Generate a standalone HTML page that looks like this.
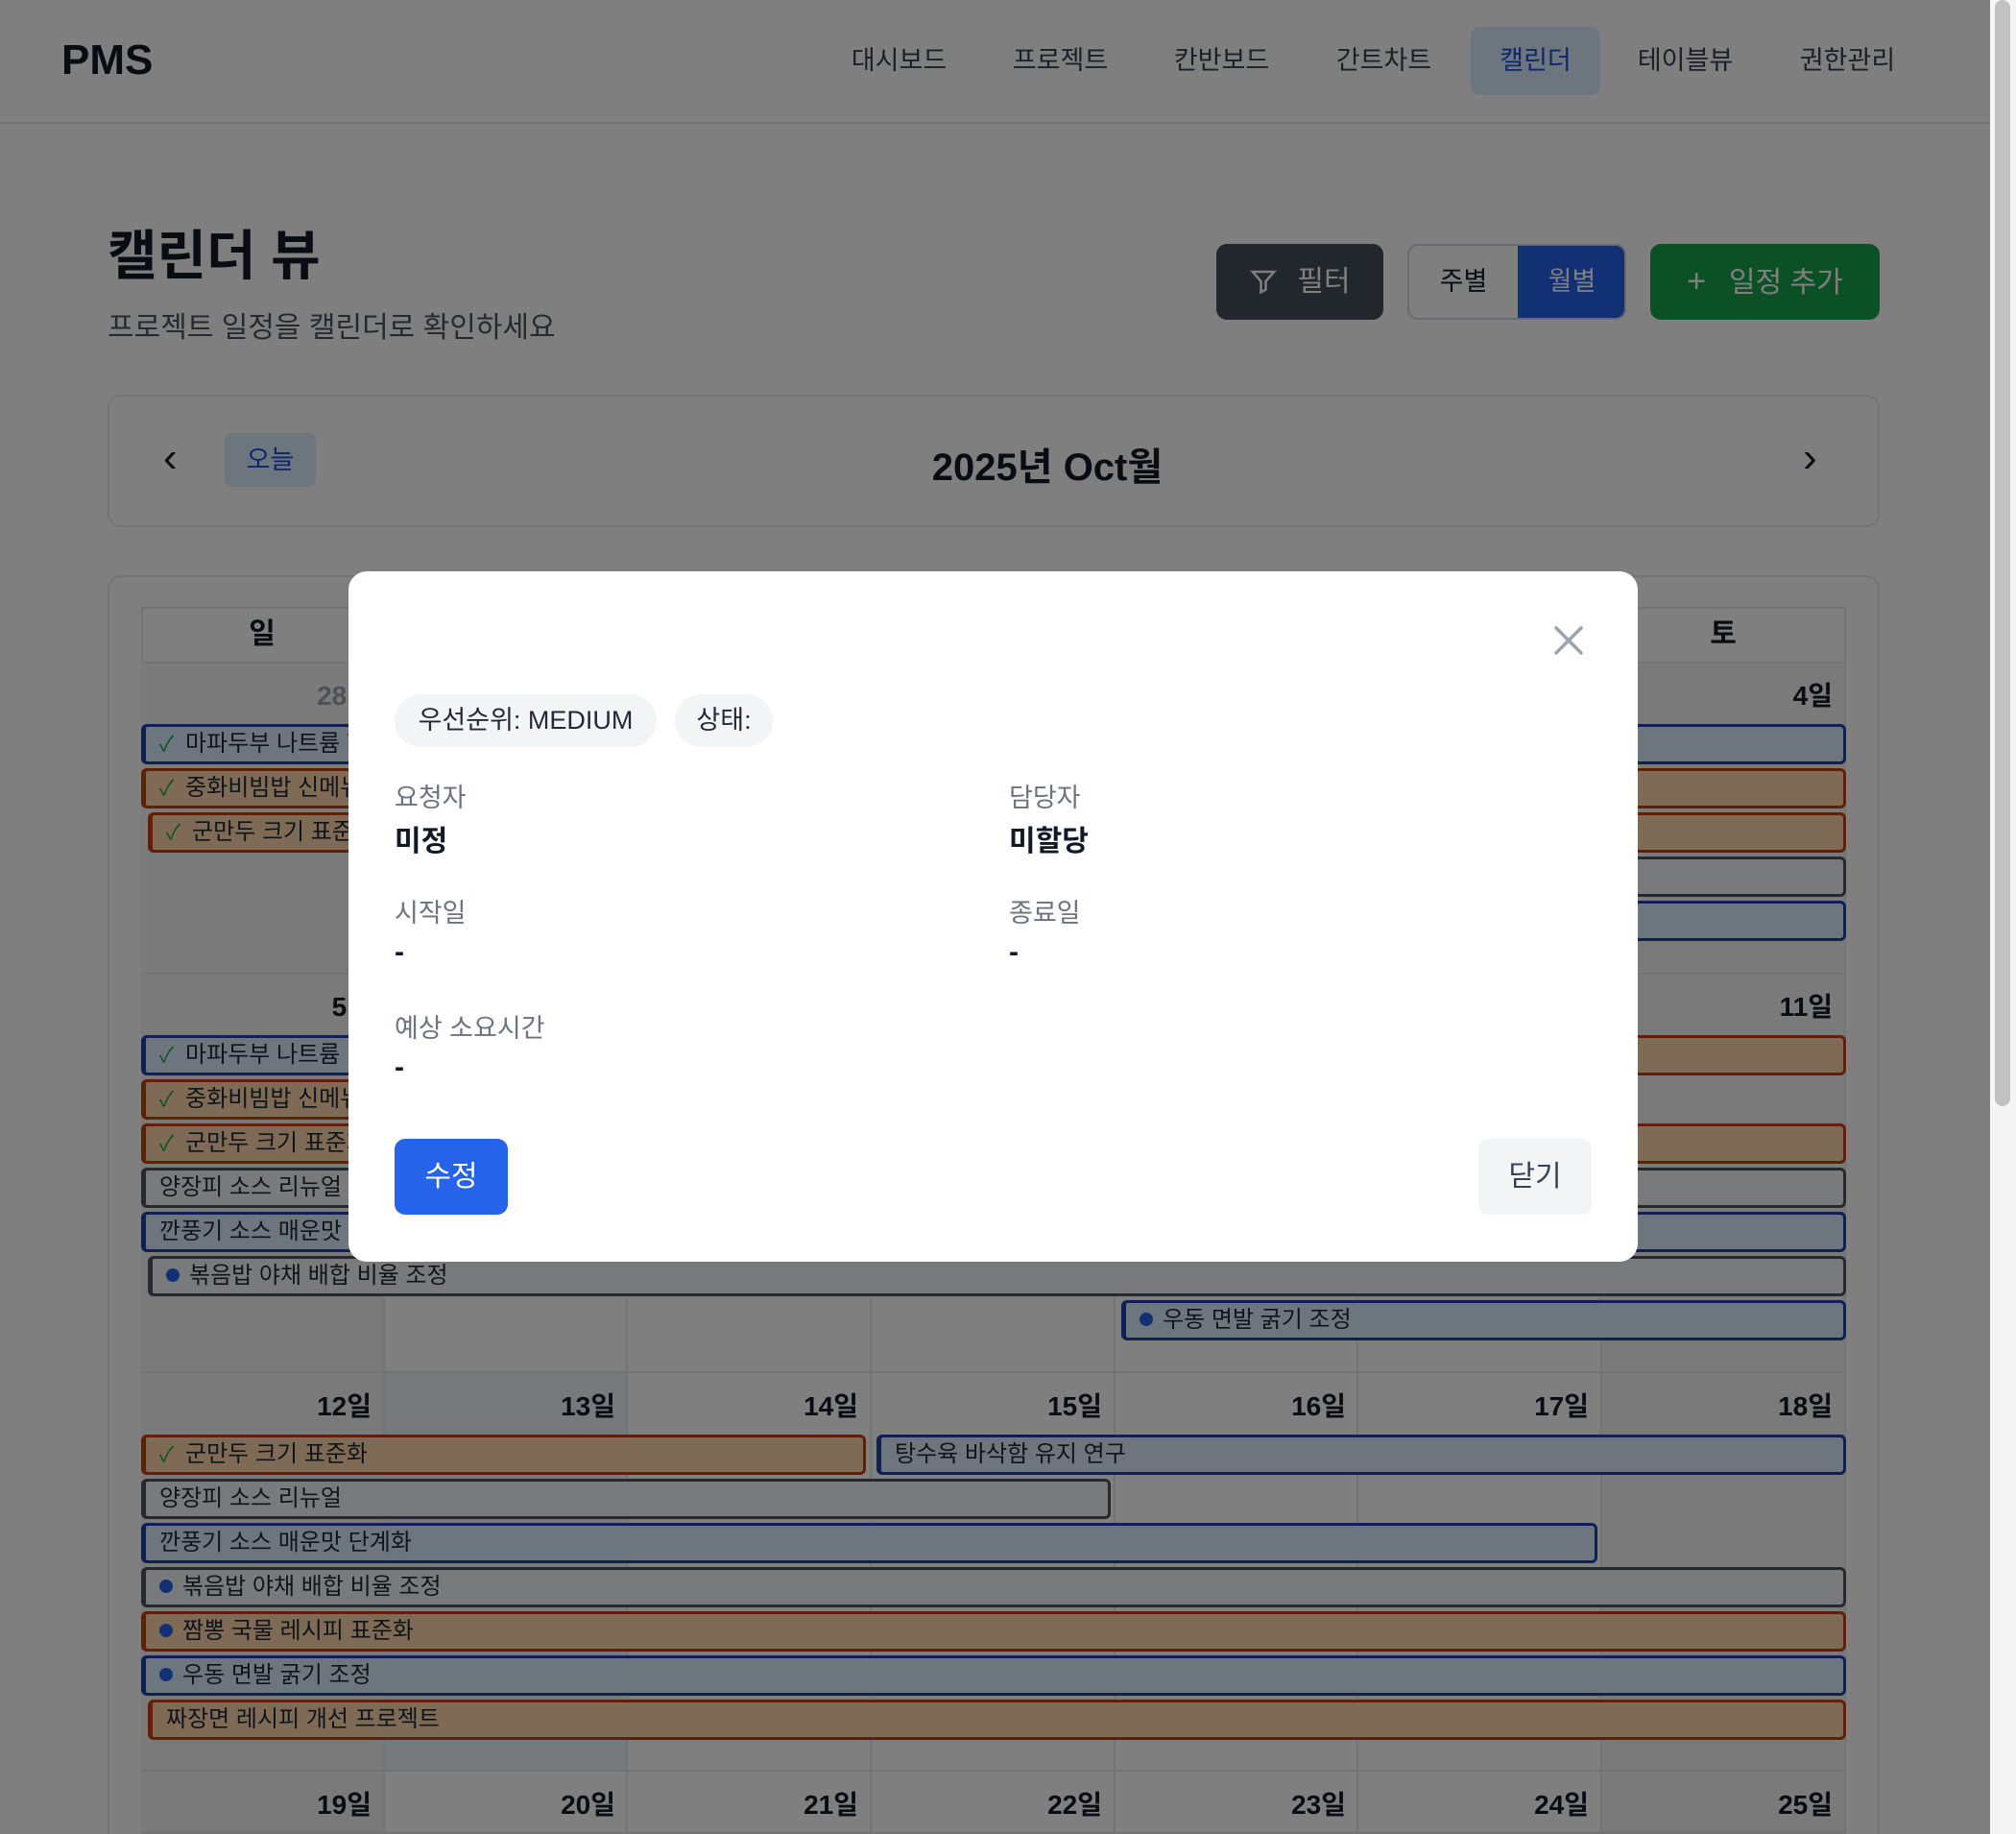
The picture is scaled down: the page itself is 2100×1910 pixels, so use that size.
<!DOCTYPE html>
<html style="width:2100px;height:1910px;overflow:hidden"><head><meta charset="utf-8">
<style>
*{margin:0;padding:0;box-sizing:border-box}
body{width:2100px;height:1910px;overflow:hidden;background:#fff;font-family:"Liberation Sans","Noto Sans CJK KR",sans-serif;color:#111827;position:relative}
.abs{position:absolute}
.hdr{position:absolute;left:0;top:0;width:2073px;height:129px;border-bottom:2px solid #e5e7eb;background:#fff}
.nav{position:absolute;top:28px;height:71px;line-height:71px;font-size:27px;color:#374151;text-align:center;width:135px;border-radius:10px}
.btn{position:absolute;border-radius:11px;font-size:30px;text-align:center;color:#fff}
.cell{position:absolute;border-right:2px solid #e5e7eb;border-bottom:2px solid #e5e7eb}
.dn{position:absolute;font-size:28px;font-weight:bold;text-align:right;width:240px;color:#111827}
.b{position:absolute;height:42px;border:3px solid;border-left-width:5px;border-radius:6px;font-size:24px;line-height:36px;padding-left:14px;white-space:nowrap;overflow:hidden;color:#1f2937}
.bl{background:#dbeafe;border-color:#1e40af}
.or{background:#fed7aa;border-color:#c2410c}
.gr{background:#f3f4f6;border-color:#4b5563}
.ck{color:#16a34a;margin-right:12px;font-size:22px}
.dot{display:inline-block;width:14px;height:14px;border-radius:50%;background:#2563eb;margin-right:10px;vertical-align:1px}
.ov{position:absolute;left:0;top:0;width:2073px;height:1910px;background:rgba(0,0,0,0.5)}
.lbl{position:absolute;font-size:27px;color:#6b7280}
.val{position:absolute;font-size:30px;font-weight:bold;color:#111827}
</style></head><body>
<div class="hdr">
  <div class="abs" style="left:64px;top:38px;font-size:44px;font-weight:bold;color:#111827">PMS</div>
  <div class="nav" style="left:869px">대시보드</div>
  <div class="nav" style="left:1037px">프로젝트</div>
  <div class="nav" style="left:1205px">칸반보드</div>
  <div class="nav" style="left:1374px">간트차트</div>
  <div class="nav" style="left:1532px;background:#dbeafe;color:#1d4ed8">캘린더</div>
  <div class="nav" style="left:1688px">테이블뷰</div>
  <div class="nav" style="left:1857px">권한관리</div>
</div>
<div class="abs" style="left:112px;top:222px;font-size:56px;font-weight:bold">캘린더 뷰</div>
<div class="abs" style="left:112px;top:316px;font-size:30px;color:#4b5563">프로젝트 일정을 캘린더로 확인하세요</div>
<div class="btn" style="left:1267px;top:254px;width:174px;height:79px;line-height:79px;background:#454d5a">
  <svg width="30" height="30" viewBox="0 0 24 24" style="vertical-align:-5px;margin-right:20px" fill="none" stroke="#fff" stroke-width="2"><path d="M3 4h18l-7 8v7l-4 2v-9z"/></svg>필터</div>
<div class="abs" style="left:1466px;top:254px;width:228px;height:79px;border:2px solid #d1d5db;border-radius:11px;overflow:hidden;background:#fff">
  <div class="abs" style="left:0;top:0;width:113px;height:75px;line-height:75px;text-align:center;font-size:27px;color:#111827">주별</div>
  <div class="abs" style="left:113px;top:0;width:113px;height:75px;line-height:75px;text-align:center;font-size:27px;color:#fff;background:#2563eb">월별</div>
</div>
<div class="btn" style="left:1719px;top:254px;width:239px;height:79px;line-height:79px;background:#17a34b"><span style="font-size:34px;margin-right:24px">+</span>일정 추가</div>

<div class="abs" style="left:112px;top:411px;width:1846px;height:138px;border:2px solid #e5e7eb;border-radius:14px;background:#fff"></div>
<div class="abs" style="left:170px;top:452px;font-size:44px;color:#111827">‹</div>
<div class="abs" style="left:234px;top:451px;width:95px;height:56px;line-height:56px;text-align:center;background:#dbeafe;color:#1d4ed8;font-size:27px;border-radius:8px">오늘</div>
<div class="abs" style="left:870px;top:454px;width:442px;text-align:center;font-size:40px;font-weight:bold">2025년 Oct월</div>
<div class="abs" style="left:1878px;top:452px;font-size:44px;color:#111827">›</div>

<div class="abs" style="left:112px;top:599px;width:1846px;height:1311px;border:2px solid #e5e7eb;border-bottom:none;border-radius:14px 14px 0 0;background:#fff"></div>
<div class="abs" style="left:147px;top:632px;width:1776px;height:1278px;border-left:2px solid #e5e7eb;border-top:2px solid #e5e7eb"></div>
<!-- header -->
<div class="cell" style="left:147px;top:632px;width:254px;height:59px;line-height:57px;text-align:center;font-size:30px;font-weight:bold">일</div>
<div class="cell" style="left:401px;top:632px;width:253px;height:59px;line-height:57px;text-align:center;font-size:30px;font-weight:bold">월</div>
<div class="cell" style="left:654px;top:632px;width:254px;height:59px;line-height:57px;text-align:center;font-size:30px;font-weight:bold">화</div>
<div class="cell" style="left:908px;top:632px;width:254px;height:59px;line-height:57px;text-align:center;font-size:30px;font-weight:bold">수</div>
<div class="cell" style="left:1162px;top:632px;width:253px;height:59px;line-height:57px;text-align:center;font-size:30px;font-weight:bold">목</div>
<div class="cell" style="left:1415px;top:632px;width:254px;height:59px;line-height:57px;text-align:center;font-size:30px;font-weight:bold">금</div>
<div class="cell" style="left:1669px;top:632px;width:254px;height:59px;line-height:57px;text-align:center;font-size:30px;font-weight:bold">토</div>

<div class="cell" style="left:147px;top:691px;width:254px;height:324px;background:#f7f7f7"></div>
<div class="cell" style="left:401px;top:691px;width:253px;height:324px"></div>
<div class="cell" style="left:654px;top:691px;width:254px;height:324px"></div>
<div class="cell" style="left:908px;top:691px;width:254px;height:324px"></div>
<div class="cell" style="left:1162px;top:691px;width:253px;height:324px"></div>
<div class="cell" style="left:1415px;top:691px;width:254px;height:324px"></div>
<div class="cell" style="left:1669px;top:691px;width:254px;height:324px;background:#f5f5f5"></div>

<div class="cell" style="left:147px;top:1015px;width:254px;height:415px;background:#f5f5f5"></div>
<div class="cell" style="left:401px;top:1015px;width:253px;height:415px"></div>
<div class="cell" style="left:654px;top:1015px;width:254px;height:415px"></div>
<div class="cell" style="left:908px;top:1015px;width:254px;height:415px"></div>
<div class="cell" style="left:1162px;top:1015px;width:253px;height:415px"></div>
<div class="cell" style="left:1415px;top:1015px;width:254px;height:415px"></div>
<div class="cell" style="left:1669px;top:1015px;width:254px;height:415px;background:#f5f5f5"></div>

<div class="cell" style="left:147px;top:1430px;width:254px;height:415px;background:#f5f5f5"></div>
<div class="cell" style="left:401px;top:1430px;width:253px;height:415px;background:#eef3fb"></div>
<div class="cell" style="left:654px;top:1430px;width:254px;height:415px"></div>
<div class="cell" style="left:908px;top:1430px;width:254px;height:415px"></div>
<div class="cell" style="left:1162px;top:1430px;width:253px;height:415px"></div>
<div class="cell" style="left:1415px;top:1430px;width:254px;height:415px"></div>
<div class="cell" style="left:1669px;top:1430px;width:254px;height:415px;background:#f5f5f5"></div>

<div class="cell" style="left:147px;top:1845px;width:254px;height:65px;background:#f5f5f5"></div>
<div class="cell" style="left:401px;top:1845px;width:253px;height:65px"></div>
<div class="cell" style="left:654px;top:1845px;width:254px;height:65px"></div>
<div class="cell" style="left:908px;top:1845px;width:254px;height:65px"></div>
<div class="cell" style="left:1162px;top:1845px;width:253px;height:65px"></div>
<div class="cell" style="left:1415px;top:1845px;width:254px;height:65px"></div>
<div class="cell" style="left:1669px;top:1845px;width:254px;height:65px;background:#f5f5f5"></div>

<div class="dn" style="left:147px;top:703px;color:#9ca3af">28일</div>
<div class="dn" style="left:401px;top:703px;color:#9ca3af">29일</div>
<div class="dn" style="left:654px;top:703px;color:#9ca3af">30일</div>
<div class="dn" style="left:908px;top:703px">1일</div>
<div class="dn" style="left:1162px;top:703px">2일</div>
<div class="dn" style="left:1415px;top:703px">3일</div>
<div class="dn" style="left:1669px;top:703px">4일</div>
<div class="dn" style="left:147px;top:1027px">5일</div>
<div class="dn" style="left:401px;top:1027px">6일</div>
<div class="dn" style="left:654px;top:1027px">7일</div>
<div class="dn" style="left:908px;top:1027px">8일</div>
<div class="dn" style="left:1162px;top:1027px">9일</div>
<div class="dn" style="left:1415px;top:1027px">10일</div>
<div class="dn" style="left:1669px;top:1027px">11일</div>
<div class="dn" style="left:147px;top:1443px">12일</div>
<div class="dn" style="left:401px;top:1443px">13일</div>
<div class="dn" style="left:654px;top:1443px">14일</div>
<div class="dn" style="left:908px;top:1443px">15일</div>
<div class="dn" style="left:1162px;top:1443px">16일</div>
<div class="dn" style="left:1415px;top:1443px">17일</div>
<div class="dn" style="left:1669px;top:1443px">18일</div>
<div class="dn" style="left:147px;top:1858px">19일</div>
<div class="dn" style="left:401px;top:1858px">20일</div>
<div class="dn" style="left:654px;top:1858px">21일</div>
<div class="dn" style="left:908px;top:1858px">22일</div>
<div class="dn" style="left:1162px;top:1858px">23일</div>
<div class="dn" style="left:1415px;top:1858px">24일</div>
<div class="dn" style="left:1669px;top:1858px">25일</div>

<div class="b bl" style="left:147px;top:754px;width:1776px"><span class="ck">✓</span>마파두부 나트륨 함량 조정</div>
<div class="b or" style="left:147px;top:800px;width:1776px"><span class="ck">✓</span>중화비빔밥 신메뉴 개발</div>
<div class="b or" style="left:154px;top:846px;width:1769px"><span class="ck">✓</span>군만두 크기 표준화</div>
<div class="b gr" style="left:908px;top:892px;width:1015px">양장피 소스 리뉴얼</div>
<div class="b bl" style="left:908px;top:938px;width:1015px">깐풍기 소스 매운맛 단계화</div>

<div class="b bl" style="left:147px;top:1078px;width:400px"><span class="ck">✓</span>마파두부 나트륨 ..</div>
<div class="b or" style="left:1669px;top:1078px;width:254px"></div>
<div class="b or" style="left:147px;top:1124px;width:1500px"><span class="ck">✓</span>중화비빔밥 신메뉴 개발</div>
<div class="b or" style="left:147px;top:1170px;width:1776px"><span class="ck">✓</span>군만두 크기 표준화</div>
<div class="b gr" style="left:147px;top:1216px;width:1776px">양장피 소스 리뉴얼</div>
<div class="b bl" style="left:147px;top:1262px;width:1776px">깐풍기 소스 매운맛 단계화</div>
<div class="b gr" style="left:154px;top:1308px;width:1769px"><span class="dot"></span>볶음밥 야채 배합 비율 조정</div>
<div class="b bl" style="left:1168px;top:1354px;width:755px"><span class="dot"></span>우동 면발 굵기 조정</div>

<div class="b or" style="left:147px;top:1494px;width:755px"><span class="ck">✓</span>군만두 크기 표준화</div>
<div class="b bl" style="left:913px;top:1494px;width:1010px">탕수육 바삭함 유지 연구</div>
<div class="b gr" style="left:147px;top:1540px;width:1010px">양장피 소스 리뉴얼</div>
<div class="b bl" style="left:147px;top:1586px;width:1517px">깐풍기 소스 매운맛 단계화</div>
<div class="b gr" style="left:147px;top:1632px;width:1776px"><span class="dot"></span>볶음밥 야채 배합 비율 조정</div>
<div class="b or" style="left:147px;top:1678px;width:1776px"><span class="dot"></span>짬뽕 국물 레시피 표준화</div>
<div class="b bl" style="left:147px;top:1724px;width:1776px"><span class="dot"></span>우동 면발 굵기 조정</div>
<div class="b or" style="left:154px;top:1770px;width:1769px">짜장면 레시피 개선 프로젝트</div>

<div class="ov"></div>
<div class="abs" style="left:2073px;top:0;width:27px;height:1910px;background:#f5f5f5"></div>
<div class="abs" style="left:2078px;top:0;width:16px;height:1152px;background:#c1c1c1;border-radius:8px"></div>

<div class="abs" style="left:363px;top:595px;width:1343px;height:719px;background:#fff;border-radius:19px">
  <svg class="abs" style="left:1255px;top:56px" width="32" height="32" viewBox="0 0 32 32" stroke="#9ca3af" stroke-width="3.5" stroke-linecap="round"><path d="M3 3L29 29M29 3L3 29"/></svg>
  <div class="abs" style="left:48px;top:128px;width:273px;height:55px;line-height:55px;border-radius:28px;background:#f3f4f6;text-align:center;font-size:27px;color:#1f2937">우선순위: MEDIUM</div>
  <div class="abs" style="left:340px;top:128px;width:102px;height:55px;line-height:55px;border-radius:28px;background:#f3f4f6;text-align:center;font-size:27px;color:#1f2937">상태:</div>
  <div class="lbl" style="left:48px;top:214px">요청자</div>
  <div class="val" style="left:48px;top:256px">미정</div>
  <div class="lbl" style="left:688px;top:214px">담당자</div>
  <div class="val" style="left:688px;top:256px">미할당</div>
  <div class="lbl" style="left:48px;top:334px">시작일</div>
  <div class="val" style="left:48px;top:380px">-</div>
  <div class="lbl" style="left:688px;top:334px">종료일</div>
  <div class="val" style="left:688px;top:380px">-</div>
  <div class="lbl" style="left:48px;top:454px">예상 소요시간</div>
  <div class="val" style="left:48px;top:500px">-</div>
  <div class="abs" style="left:48px;top:591px;width:118px;height:79px;line-height:79px;background:#2563eb;color:#fff;border-radius:11px;text-align:center;font-size:30px">수정</div>
  <div class="abs" style="left:1177px;top:591px;width:118px;height:79px;line-height:79px;background:#f3f4f6;color:#374151;border-radius:11px;text-align:center;font-size:30px">닫기</div>
</div>
</body></html>
